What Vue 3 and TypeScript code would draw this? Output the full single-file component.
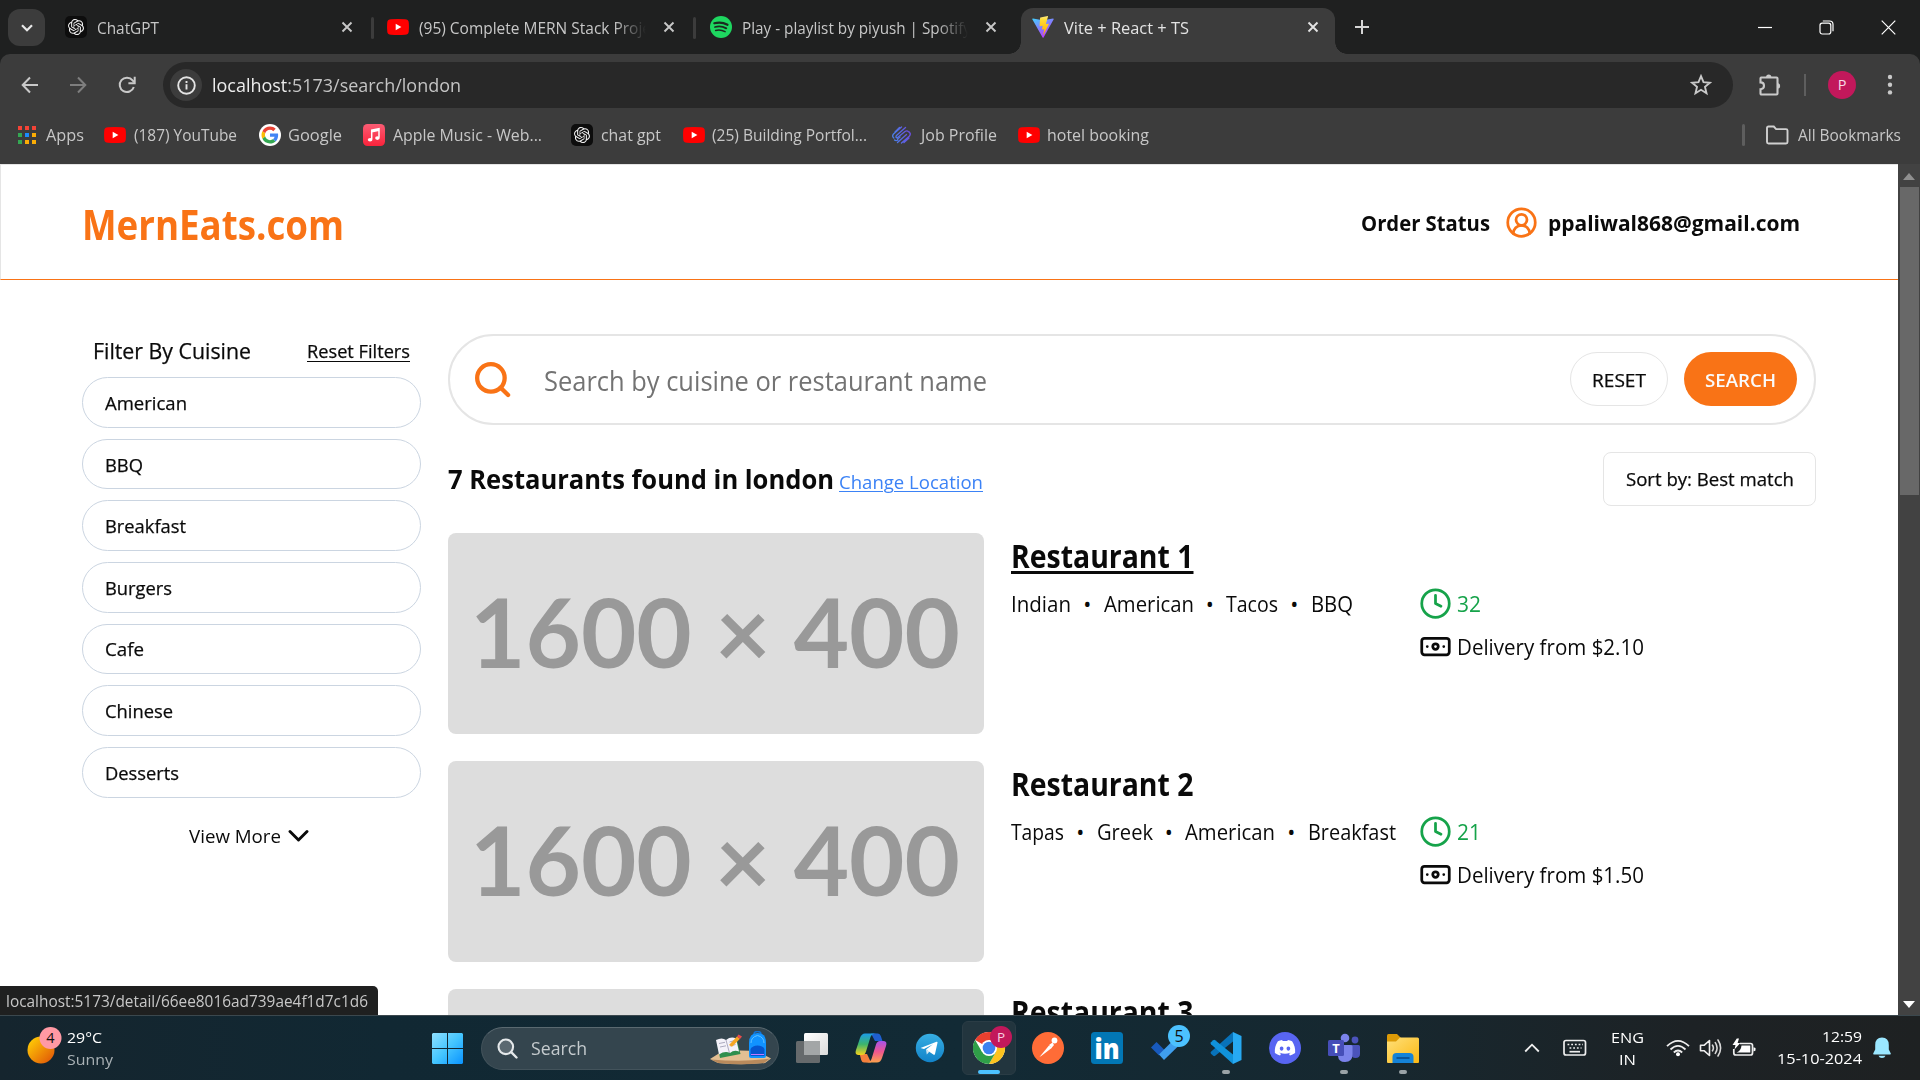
<script setup lang="ts">
import type { Directive } from 'vue'

/** Condenses or widens a label so that it takes an exact width in px. */
const vFit: Directive<HTMLElement, number> = {
  mounted(el, binding) {
    el.style.display = 'inline-block'
    el.style.whiteSpace = 'nowrap'
    el.style.flex = 'none'
    el.style.width = 'max-content'
    const natural = el.getBoundingClientRect().width
    if (natural === 0) return
    el.style.width = `${natural}px`
    el.style.transformOrigin = '0 50%'
    el.style.transform = `scaleX(${binding.value / natural})`
    el.style.marginRight = `${binding.value - natural}px`
  },
}

interface Bookmark { icon: string; label: string; width: number; gap: number; before: number }
const bookmarks: Bookmark[] = [
  { icon: 'youtube', label: '(187) YouTube', width: 103, gap: 8, before: 20 },
  { icon: 'google', label: 'Google', width: 54, gap: 7, before: 22 },
  { icon: 'music', label: 'Apple Music - Web...', width: 149, gap: 8, before: 21 },
  { icon: 'chatgpt', label: 'chat gpt', width: 60, gap: 8, before: 29 },
  { icon: 'youtube', label: '(25) Building Portfol...', width: 155, gap: 7, before: 22 },
  { icon: 'job', label: 'Job Profile', width: 76, gap: 8, before: 24 },
  { icon: 'youtube', label: 'hotel booking', width: 102, gap: 7, before: 21 },
]

const appColors = ['#f44336', '#f44336', '#f44336', '#34a853', '#1a8cff', '#fbad05', '#34a853', '#fbad05', '#fbad05']

interface Cuisine { name: string; width: number }
const filters: Cuisine[] = [
  { name: 'American', width: 82 },
  { name: 'BBQ', width: 38 },
  { name: 'Breakfast', width: 81 },
  { name: 'Burgers', width: 67 },
  { name: 'Cafe', width: 39 },
  { name: 'Chinese', width: 68 },
  { name: 'Desserts', width: 74 },
]

interface Restaurant { name: string; hovered: boolean; cuisines: Cuisine[]; minutes: number; price: string }
const restaurants: Restaurant[] = [
  {
    name: 'Restaurant 1', hovered: true, minutes: 32, price: '2.10',
    cuisines: [{ name: 'Indian', width: 60 }, { name: 'American', width: 90 }, { name: 'Tacos', width: 52 }, { name: 'BBQ', width: 42 }],
  },
  {
    name: 'Restaurant 2', hovered: false, minutes: 21, price: '1.50',
    cuisines: [{ name: 'Tapas', width: 53 }, { name: 'Greek', width: 56 }, { name: 'American', width: 90 }, { name: 'Breakfast', width: 88 }],
  },
  { name: 'Restaurant 3', hovered: false, minutes: 0, price: '', cuisines: [] },
]
</script>

<template>
  <div class="screen">
    <svg class="sprite" width="0" height="0">
      <defs>
        <linearGradient id="gVite" x1="0" y1="0" x2="0.6" y2="1"><stop offset="0" stop-color="#41d1ff" /><stop offset="1" stop-color="#bd34fe" /></linearGradient>
        <linearGradient id="gBolt" x1="0" y1="0" x2="0" y2="1"><stop offset="0" stop-color="#ffea83" /><stop offset="0.2" stop-color="#ffdd35" /><stop offset="1" stop-color="#ffa800" /></linearGradient>
        <linearGradient id="gMusic" x1="0" y1="0" x2="0" y2="1"><stop offset="0" stop-color="#fb5c74" /><stop offset="1" stop-color="#fa233b" /></linearGradient>
        <linearGradient id="gJob" x1="0" y1="0" x2="1" y2="0"><stop offset="0" stop-color="#4a80e8" /><stop offset="1" stop-color="#6a4fe0" /></linearGradient>
      </defs>
      <symbol id="chatgpt" viewBox="0 0 22 22">
        <rect width="22" height="22" rx="5" fill="#0d0d0d" />
        <path transform="translate(3 3) scale(.667)" fill="#f2f2f2" d="M22.2819 9.8211a5.9847 5.9847 0 0 0-.5157-4.9108 6.0462 6.0462 0 0 0-6.5098-2.9A6.0651 6.0651 0 0 0 4.9807 4.1818a5.9847 5.9847 0 0 0-3.9977 2.9 6.0462 6.0462 0 0 0 .7427 7.0966 5.98 5.98 0 0 0 .511 4.9107 6.051 6.051 0 0 0 6.5146 2.9001A5.9847 5.9847 0 0 0 13.2599 24a6.0557 6.0557 0 0 0 5.7718-4.2058 5.9894 5.9894 0 0 0 3.9977-2.9001 6.0557 6.0557 0 0 0-.7475-7.0729zm-9.022 12.6081a4.4755 4.4755 0 0 1-2.8764-1.0408l.1419-.0804 4.7783-2.7582a.7948.7948 0 0 0 .3927-.6813v-6.7369l2.02 1.1686a.071.071 0 0 1 .038.052v5.5826a4.504 4.504 0 0 1-4.4945 4.4944zm-9.6607-4.1254a4.4708 4.4708 0 0 1-.5346-3.0137l.142.0852 4.783 2.7582a.7712.7712 0 0 0 .7806 0l5.8428-3.3685v2.3324a.0804.0804 0 0 1-.0332.0615L9.74 19.9502a4.4992 4.4992 0 0 1-6.1408-1.6464zM2.3408 7.8956a4.485 4.485 0 0 1 2.3655-1.9728V11.6a.7664.7664 0 0 0 .3879.6765l5.8144 3.3543-2.0201 1.1685a.0757.0757 0 0 1-.071 0l-4.8303-2.7865A4.504 4.504 0 0 1 2.3408 7.872zm16.5963 3.8558L13.1038 8.364 15.1192 7.2a.0757.0757 0 0 1 .071 0l4.8303 2.7913a4.4944 4.4944 0 0 1-.6765 8.1042v-5.6772a.79.79 0 0 0-.407-.667zm2.0107-3.0231l-.142-.0852-4.7735-2.7818a.7759.7759 0 0 0-.7854 0L9.409 9.2297V6.8974a.0662.0662 0 0 1 .0284-.0615l4.8303-2.7866a4.4992 4.4992 0 0 1 6.6802 4.66zM8.3065 12.863l-2.02-1.1638a.0804.0804 0 0 1-.038-.0567V6.0742a4.4992 4.4992 0 0 1 7.3757-3.4537l-.142.0805L8.704 5.459a.7948.7948 0 0 0-.3927.6813zm1.0976-2.3654l2.602-1.4998 2.6069 1.4998v2.9994l-2.5974 1.4997-2.6067-1.4997Z" />
      </symbol>
      <symbol id="youtube" viewBox="0 0 22 22">
        <path fill="#f00" d="M4 1.700Q11 1.200 18 1.700Q21.400 2 21.700 5Q22.200 11 21.700 17Q21.400 20 18 20.300Q11 20.800 4 20.300Q.6 20 .3 17Q-.2 11 .3 5Q.6 2 4 1.700Z" transform="translate(0 1.900) scale(1 .83)" />
        <path fill="#fff" d="M8.700 7.800v6.400l5.700-3.200z" />
      </symbol>
      <symbol id="spotify" viewBox="0 0 22 22">
        <circle cx="11" cy="11" r="11" fill="#1ed760" />
        <g fill="none" stroke="#1b2a20" stroke-linecap="round"><path d="M4.300 7.300q7-2 13.200 1.500" stroke-width="2.200" /><path d="M5 11q6-1.700 11.300 1.400" stroke-width="1.800" /><path d="M5.600 14.400q5-1.300 9.500 1.300" stroke-width="1.500" /></g>
      </symbol>
      <symbol id="vite" viewBox="0 0 22 22">
        <path fill="url(#gVite)" d="M21.700 3.300 11.600 21.500q-.5.700-1 0L.3 3.300q-.3-.9.600-.8l10.100 1.800 10.100-1.800q.9 0 .6.800z" />
        <path fill="url(#gBolt)" d="M15.800.1 8.400 1.600q-.3.100-.3.400L7.600 9.800q0 .5.500.4l2.100-.5q.5 0 .4.500l-.6 3q0 .5.500.4l1.300-.4q.5 0 .4.500l-1 4.700q0 .7.500.2l5.200-10.500q.2-.5-.4-.4l-2.100.4q-.5 0-.4-.5L15.900 1q.2-.7-.1-.9z" />
      </symbol>
      <symbol id="google" viewBox="0 0 22 22">
        <circle cx="11" cy="11" r="11" fill="#fff" />
        <g transform="translate(2.500 2.500) scale(.354)">
          <path fill="#EA4335" d="M24 9.500c3.540 0 6.710 1.220 9.210 3.600l6.850-6.850C35.900 2.380 30.470 0 24 0 14.620 0 6.510 5.380 2.560 13.220l7.980 6.190C12.430 13.720 17.740 9.500 24 9.500z" />
          <path fill="#4285F4" d="M46.980 24.550c0-1.570-.15-3.090-.38-4.550H24v9.020h12.940c-.58 2.960-2.260 5.480-4.780 7.180l7.730 6c4.510-4.180 7.090-10.360 7.090-17.650z" />
          <path fill="#FBBC05" d="M10.530 28.590c-.48-1.450-.76-2.990-.76-4.590s.27-3.140.76-4.590l-7.980-6.190C.92 16.460 0 20.120 0 24c0 3.880.92 7.540 2.560 10.780l7.970-6.190z" />
          <path fill="#34A853" d="M24 48c6.480 0 11.930-2.130 15.890-5.810l-7.730-6c-2.150 1.450-4.920 2.300-8.160 2.300-6.260 0-11.570-4.220-13.470-9.910l-7.980 6.190C6.510 42.620 14.620 48 24 48z" />
        </g>
      </symbol>
      <symbol id="music" viewBox="0 0 22 22">
        <rect width="22" height="22" rx="4.500" fill="url(#gMusic)" />
        <path d="M8.700 15.200V6.200l7.300-1.500v8.800M8.700 7.700l7.300-1.500" fill="none" stroke="#fff" stroke-width="1.500" />
        <ellipse cx="7.100" cy="15.800" rx="2.300" ry="1.800" fill="#fff" /><ellipse cx="14.400" cy="14.100" rx="2.300" ry="1.800" fill="#fff" />
      </symbol>
      <symbol id="job" viewBox="0 0 22 22">
        <g fill="none" stroke="url(#gJob)" stroke-width="1.300" stroke-linecap="round" stroke-linejoin="round">
          <path d="M10.500 3 2.500 10q-1.800 2.200.3 4M14.500 3.500 5.500 11.500q-1.300 1.800.5 2.500L14 7.500q2-1.300 3.500.200M4 8 8.500 3.500" />
          <path d="M10.500 19 18.500 12q1.800-2.200-.3-4M6.500 18.500 15.500 10.500M6.500 15 9 13M13 18.500l5-4.500M3.500 16q1.500 1.300 3.500 0" />
        </g>
      </symbol>
      <symbol id="close" viewBox="0 0 12 12"><path d="M1.500 1.500l9 9M10.500 1.500l-9 9" stroke="currentColor" stroke-width="1.900" fill="none" /></symbol>
    </svg>

    <!-- Tab strip -->
    <div class="tabs">
      <div class="tab-search"><svg width="12" height="8" viewBox="0 0 12 8"><path d="M1 1.200l5 5 5-5" fill="none" stroke="#e8e8e8" stroke-width="2.200" /></svg></div>
      <div class="tab t1">
        <svg class="fav"><use href="#chatgpt" /></svg><span class="title"><span v-fit="62">ChatGPT</span></span>
        <svg class="x"><use href="#close" /></svg>
      </div>
      <i class="tab-sep" />
      <div class="tab t2">
        <svg class="fav"><use href="#youtube" /></svg><span class="title fade"><span v-fit="232">(95) Complete MERN Stack Proje</span></span>
        <svg class="x"><use href="#close" /></svg>
      </div>
      <i class="tab-sep" />
      <div class="tab t3">
        <svg class="fav"><use href="#spotify" /></svg><span class="title fade"><span v-fit="229">Play - playlist by piyush | Spotify</span></span>
        <svg class="x"><use href="#close" /></svg>
      </div>
      <div class="tab active">
        <svg class="fav"><use href="#vite" /></svg><span class="title"><span v-fit="125">Vite + React + TS</span></span>
        <svg class="x"><use href="#close" /></svg>
      </div>
      <svg class="plus" width="16" height="16" viewBox="0 0 16 16"><path d="M8 1v14M1 8h14" stroke="#d5d5d5" stroke-width="2" /></svg>
      <div class="win">
        <svg width="14" height="14" viewBox="0 0 14 14"><path d="M0 7.500h14" stroke="#fff" stroke-width="1.200" /></svg>
        <svg width="15" height="15" viewBox="0 0 15 15"><g fill="none" stroke="#fff" stroke-width="1.200"><rect x="1" y="3.200" width="10.800" height="10.800" rx="2.200" /><path d="M3.800 1h6.700q3.500 0 3.500 3.500v6.700" /></g></svg>
        <svg width="15" height="15" viewBox="0 0 15 15"><path d="M.7.700l13.600 13.600M14.300.7L.7 14.300" stroke="#fff" stroke-width="1.200" /></svg>
      </div>
    </div>

    <!-- Toolbar -->
    <div class="toolbar">
      <svg class="nav back" width="18" height="18" viewBox="0 0 18 18"><path d="M17 9H2M9 1.500L1.700 9 9 16.500" fill="none" stroke="#c9c9c9" stroke-width="2" /></svg>
      <svg class="nav fwd" width="18" height="18" viewBox="0 0 18 18"><path d="M1 9h15M9 1.500L16.300 9 9 16.500" fill="none" stroke="#7e7e7e" stroke-width="2" /></svg>
      <svg class="nav" width="18" height="18" viewBox="0 0 18 18"><path d="M15.800 11A7.200 7.200 0 1 1 14.600 4.400L16 6" fill="none" stroke="#c9c9c9" stroke-width="2" /><path d="M16.700.8v6.400h-6.300" fill="none" stroke="#c9c9c9" stroke-width="2" /></svg>
      <div class="omnibox">
        <div class="info"><svg width="19" height="19" viewBox="0 0 19 19"><circle cx="9.500" cy="9.500" r="8.300" fill="none" stroke="#e3e3e3" stroke-width="1.900" /><path d="M9.500 8.300v5.200M9.500 5v2" stroke="#e3e3e3" stroke-width="1.900" /></svg></div>
        <span class="url"><span v-fit="249"><b>localhost</b>:5173/search/london</span></span>
        <svg class="star" width="22" height="22" viewBox="0 0 22 22"><path d="M11 2.200l2.500 6 6.400.5-4.900 4.200 1.500 6.300-5.500-3.400-5.500 3.400L7 12.900 2.100 8.700l6.400-.5z" fill="none" stroke="#c9c9c9" stroke-width="1.900" /></svg>
      </div>
      <svg class="ext" width="24" height="24" viewBox="0 0 24 24"><path d="M3.500 4.500h16q1 0 1 1v15q0 1-1 1h-15q-1 0-1-1v-4.300q3.500 0 3.500-3.400T3.500 9.400V5.500q0-1 1-1z" fill="none" stroke="#c9c9c9" stroke-width="2.100" /><path d="M9 4.500a2.700 2.900 0 0 1 5.400 0zM20.500 10.200a2.700 2.800 0 0 1 0 5.600z" fill="#c9c9c9" /></svg>
      <i class="bar-sep" />
      <div class="avatar">P</div>
      <svg class="dots" width="6" height="24" viewBox="0 0 6 24"><g fill="#c9c9c9"><circle cx="3" cy="4" r="2.200" /><circle cx="3" cy="11.700" r="2.200" /><circle cx="3" cy="19.400" r="2.200" /></g></svg>
    </div>

    <!-- Bookmarks bar -->
    <div class="bookmarks">
      <div class="apps"><i v-for="(c, i) in appColors" :key="i" :style="{ background: c }" /></div>
      <span class="bm-label first" v-fit="38">Apps</span>
      <template v-for="b in bookmarks" :key="b.label">
        <svg class="fav" :style="{ marginLeft: b.before + 'px', marginRight: b.gap + 'px' }"><use :href="'#' + b.icon" /></svg>
        <span class="bm-label" v-fit="b.width">{{ b.label }}</span>
      </template>
      <i class="bm-sep" />
      <svg class="folder" width="24" height="20" viewBox="0 0 24 20"><path d="M2 3q0-1.500 1.500-1.500h5.300l2.300 2.600h9.900q1.500 0 1.500 1.500V17q0 1.500-1.500 1.500H3.500Q2 18.500 2 17z" fill="none" stroke="#d0d0d0" stroke-width="1.900" /></svg>
      <div class="bm-all"><span class="bm-label" v-fit="103">All Bookmarks</span></div>
    </div>

    <!-- Page viewport -->
    <div class="viewport">
      <div class="page">
        <header>
          <div class="logo" v-fit="262">MernEats.com</div>
          <div class="account">
            <span v-fit="129">Order Status</span>
            <svg class="user" width="33" height="33" viewBox="0 0 24 24" fill="none" stroke="#f97316" stroke-width="2" stroke-linecap="round"><path d="M18 20a6 6 0 0 0-12 0" /><circle cx="12" cy="10" r="4" /><circle cx="12" cy="12" r="10" /></svg>
            <span v-fit="252">ppaliwal868@gmail.com</span>
          </div>
        </header>

        <main>
          <aside>
            <div class="filter-head">
              <span class="filter-title medium" v-fit="158">Filter By Cuisine</span>
              <span class="filter-reset medium" v-fit="103">Reset Filters</span>
            </div>
            <div class="pills">
              <div v-for="f in filters" :key="f.name" class="pill medium"><span v-fit="f.width">{{ f.name }}</span></div>
            </div>
            <div class="more">
              <span v-fit="92">View More</span>
              <svg width="21" height="14" viewBox="0 0 21 14"><path d="M2 2.500l8.500 8.500L19 2.500" fill="none" stroke="#0a0a0a" stroke-width="2.900" stroke-linecap="round" stroke-linejoin="round" /></svg>
            </div>
          </aside>

          <section>
            <div class="search">
              <svg class="lens" width="41.250" height="41.250" viewBox="0 0 24 24" fill="none" stroke="#f97316" stroke-width="2.500" stroke-linecap="round"><circle cx="11" cy="11" r="8" /><path d="M21 21l-4.300-4.300" /></svg>
              <span class="ph" v-fit="443">Search by cuisine or restaurant name</span>
              <div class="btn reset medium"><span v-fit="54">RESET</span></div>
              <div class="btn go"><span v-fit="71">SEARCH</span></div>
            </div>
            <div class="found">
              <span class="found-text" v-fit="386">7 Restaurants found in london</span>
              <span class="change" v-fit="144">Change Location</span>
              <div class="sort medium"><span v-fit="168">Sort by: Best match</span></div>
            </div>
            <div class="list">
              <article v-for="r in restaurants" :key="r.name">
                <div class="photo"><span v-if="r.cuisines.length" v-fit="490">1600 × 400</span></div>
                <div class="info-col">
                  <h3 :class="{ hovered: r.hovered }"><span v-fit="182.500">{{ r.name }}</span></h3>
                  <div v-if="r.cuisines.length" class="meta">
                    <div class="cuisines">
                      <template v-for="(c, i) in r.cuisines" :key="c.name">
                        <i v-if="i > 0" class="dot">•</i><span v-fit="c.width">{{ c.name }}</span>
                      </template>
                    </div>
                    <div class="delivery">
                      <div class="line time">
                        <svg width="33" height="33" viewBox="0 0 24 24" fill="none" stroke="currentColor" stroke-width="2" stroke-linecap="round" stroke-linejoin="round"><circle cx="12" cy="12" r="10" /><path d="M12 6v6l4 2" /></svg>
                        <span v-fit="24">{{ r.minutes }}</span>
                      </div>
                      <div class="line">
                        <svg width="33" height="33" viewBox="0 0 24 24" fill="none" stroke="currentColor" stroke-width="2" stroke-linecap="round" stroke-linejoin="round"><rect x="2" y="6" width="20" height="12" rx="2" /><circle cx="12" cy="12" r="2" /><path d="M6 12h.01M18 12h.01" /></svg>
                        <span v-fit="187">Delivery from ${{ r.price }}</span>
                      </div>
                    </div>
                  </div>
                </div>
              </article>
            </div>
          </section>
        </main>
      </div>
      <div class="scrollbar">
        <svg width="12" height="7" viewBox="0 0 12 7"><path d="M6 0l6 7H0z" fill="#8f8f8f" /></svg>
        <div class="thumb" />
        <svg class="down" width="12" height="7" viewBox="0 0 12 7"><path d="M0 0h12L6 7z" fill="#fff" /></svg>
      </div>
      <div class="status"><span v-fit="362">localhost:5173/detail/66ee8016ad739ae4f1d7c1d6</span></div>
    </div>

    <!-- Taskbar -->
    <div class="taskbar">
      <svg class="sun" width="36" height="40" viewBox="0 0 36 40">
        <defs><linearGradient id="gSun" x1="0" y1="0" x2="1" y2="1"><stop offset="0.1" stop-color="#ffcb05" /><stop offset="0.9" stop-color="#e25b07" /></linearGradient></defs>
        <circle cx="14" cy="24" r="13.500" fill="url(#gSun)" /><circle cx="23.500" cy="12" r="11" fill="#ff99a4" />
        <text x="23.500" y="17" text-anchor="middle" font-size="14.500" fill="#111">4</text>
      </svg>
      <div class="weather"><span v-fit="35">29°C</span><span class="dim" v-fit="46">Sunny</span></div>

      <svg class="start" width="31" height="31" viewBox="0 0 31 31">
        <defs><linearGradient id="gWin" x1="0" y1="0" x2="31" y2="31" gradientUnits="userSpaceOnUse"><stop offset="0" stop-color="#8fe0ff" /><stop offset="0.5" stop-color="#45c6ff" /><stop offset="1" stop-color="#0a93ff" /></linearGradient></defs>
        <path fill="url(#gWin)" d="M1 0h14v15H0V1zM16 0h14l1 1v14H16zM0 16h15v15H1l-1-1zM16 16h15v14l-1 1H16z" />
      </svg>

      <div class="tb-search">
        <svg width="21" height="21" viewBox="0 0 21 21"><circle cx="8.800" cy="8.800" r="7.300" fill="#5a6870" stroke="#e4e8ea" stroke-width="2.100" /><path d="M14.200 14.200l5.300 5.300" stroke="#e4e8ea" stroke-width="2.400" stroke-linecap="round" /></svg>
        <span v-fit="56">Search</span>
        <svg class="school" width="61" height="34" viewBox="0 0 61 34">
          <path d="M0 28L12 20.500q18-2 36 0l13 7-6 4.500q-24 2.500-47 0z" fill="#e3bf93" /><path d="M1 28.500l7 3.500q23 2.500 46 0l6-4.500q-25 4-59 1z" fill="#b98a5c" />
          <path d="M7 12l20-3 3.500 14-20.500 4z" fill="#2f8f4e" /><path d="M6 9q6-3 10 0 5-4 10-1.500l3 13q-5-2-9 1.500-5-2.500-11 1.500z" fill="#f4f2fa" /><path d="M16 9l3.500 13M9 12.500l6-1.200M10 16l6-1.200M19.500 11l5-1.500M20.500 15l5-1.500" stroke="#8d8aa5" stroke-width=".7" />
          <path d="M19 14l8-8.500 3 2.300-8 8z" fill="#f6a623" /><path d="M27 5.500l1.500-2 3.500 2-2 2.500z" fill="#e94b4b" />
          <path d="M44 3q0-2.500 3.500-2.500T51 3" fill="none" stroke="#1372d3" stroke-width="1.500" /><path d="M39 12q0-10 8.500-10T56 12v13q0 2-2 2H41q-2 0-2-2z" fill="#1193ff" /><path d="M41 12q0-6 6.500-7.500Q54 6 54 12" fill="none" stroke="#63c4ff" stroke-width="1" />
          <path d="M40.500 18q2-3.500 7-3.500t7 3.500v7h-14z" fill="#0656cf" /><path d="M41 23.500h13" stroke="#c07bff" stroke-width="1" />
        </svg>
      </div>

      <svg class="tb" width="32" height="32" viewBox="0 0 32 32">
        <defs><linearGradient id="gTv" x1="0" y1="0" x2="1" y2="1"><stop offset="0" stop-color="#fff" /><stop offset="1" stop-color="#dcdcdc" /></linearGradient></defs>
        <rect x="0" y="9" width="24" height="22" rx="1.500" fill="#666a6c" /><rect x="8" y="1" width="24" height="22" rx="1.500" fill="url(#gTv)" /><path d="M8 9h16v14H8z" fill="#a3a6a7" />
      </svg>

      <svg class="tb" width="32" height="32" viewBox="0 0 32 32">
        <defs>
          <linearGradient id="cA" x1="0" y1="0" x2="0" y2="1"><stop offset="0" stop-color="#1b9be8" /><stop offset="0.5" stop-color="#3cb56c" /><stop offset="1" stop-color="#f6d31c" /></linearGradient>
          <linearGradient id="cB" x1="0" y1="0" x2="0" y2="1"><stop offset="0" stop-color="#a653ea" /><stop offset="0.5" stop-color="#f0568f" /><stop offset="1" stop-color="#fba24d" /></linearGradient>
        </defs>
        <path d="M16 1.500h7q2 0 2.800 2.600L27.500 9H20z" fill="#1f5fd0" /><path d="M16 30.500H9q-2 0-2.800-2.600L4.700 22H12z" fill="#f5803c" />
        <path d="M22 1.500H10q-3.500 0-5 4.500L1 18q-1.500 5 2.500 5H7q3 0 4-3.500L15.500 5q1-3.500 6.500-3.500z" fill="url(#cA)" />
        <path d="M10 30.500h12q3.500 0 5-4.500l4-12q1.500-5-2.500-5H25q-3 0-4 3.500L16.500 27q-1 3.500-6.500 3.500z" fill="url(#cB)" />
      </svg>

      <svg class="tb" width="32" height="32" viewBox="0 0 32 32">
        <defs><linearGradient id="gTg" x1="0" y1="0" x2="0" y2="1"><stop offset="0" stop-color="#37aee2" /><stop offset="1" stop-color="#1283c9" /></linearGradient></defs>
        <circle cx="16" cy="16" r="14.200" fill="url(#gTg)" /><path d="M6.500 16L22.500 9.700q1.300-.3 1 1L21 22q-.4 1.300-1.700.6L12 17.500l7-5.300-9 4.800z" fill="#fff" /><path d="M12 17.400l.8 5 2.700-2.800z" fill="#d4e6f2" />
      </svg>

      <div class="tile">
        <svg class="tb" width="40" height="40" viewBox="-16 -16 40 40">
          <circle r="16" fill="#fff" />
          <path fill="#e8402f" d="M0 0L-13.860-8A16 16 0 0 1 13.860-8H0z" /><path fill="#fcc31e" d="M13.860-8A16 16 0 0 1 0 16L6.900 4 0-8z" /><path fill="#2f9e48" d="M-13.860-8A16 16 0 0 0 0 16L6.900 4-6.900 4z" />
          <circle r="8" fill="#fff" /><circle r="6.300" fill="#3b82f0" />
        </svg>
        <b class="who">P</b>
        <i class="run" />
      </div>

      <svg class="tb" width="32" height="32" viewBox="0 0 32 32"><circle cx="16" cy="16" r="16" fill="#ff6c37" /><path d="M7.500 25l9.500-11.500 3 2.300L9.500 23.800z" fill="#fff" /><circle cx="22.500" cy="8.500" r="2.900" fill="#fff" /><path d="M17 13l3.500-2.500 1.500 2.500-2.500 3z" fill="#fff" /></svg>

      <svg class="tb" width="32" height="32" viewBox="0 0 32 32"><rect width="32" height="32" rx="3.500" fill="#0277b5" /><text x="16" y="27" text-anchor="middle" font-size="29" font-weight="800" textLength="25" lengthAdjust="spacingAndGlyphs" fill="#fff">in</text></svg>

      <svg class="tb todo" width="42" height="40" viewBox="0 0 42 40">
        <path d="M0 22.500L5.500 17l8 8-5.500 5.500z" fill="#185abd" /><path d="M8 30.500L26 12.500l5.500 5.500-18.500 18z" fill="#3f9fee" transform="translate(0 -1)" />
        <circle cx="28" cy="11" r="11" fill="#4cc2ff" /><text x="28" y="16.500" text-anchor="middle" font-size="16" fill="#111">5</text>
      </svg>

      <div class="app">
        <svg class="tb" width="32" height="32" viewBox="0 0 32 32"><path d="M23 0l8.500 4v24L23 32z" fill="#27a9f2" /><path d="M23 0L1 19.800q-1 1 0 2l2.200 2q1 .8 2 0L23 9.500z" fill="#0872b9" /><path d="M23 32L1 12.200q-1-1 0-2l2.200-2q1-.8 2 0L23 22.500z" fill="#1093db" /></svg>
        <i class="run small" />
      </div>

      <svg class="tb" width="32" height="32" viewBox="0 0 32 32"><circle cx="16" cy="16" r="16" fill="#5865f2" /><path transform="translate(5.800 5.600) scale(.85)" fill="#fff" d="M20.317 4.3698a19.7913 19.7913 0 00-4.8851-1.5152.0741.0741 0 00-.0785.0371c-.211.3753-.4447.8648-.6083 1.2495-1.8447-.2762-3.680-.2762-5.4868 0-.1636-.3933-.4058-.8742-.6177-1.2495a.077.077 0 00-.0785-.037 19.7363 19.7363 0 00-4.8852 1.515.0699.0699 0 00-.0321.0277C.5334 9.0458-.319 13.5799.0992 18.0578a.0824.0824 0 00.0312.0561c2.0528 1.5076 4.0413 2.4228 5.9929 3.0294a.0777.0777 0 00.0842-.0276c.4616-.6304.8731-1.2952 1.226-1.9942a.076.076 0 00-.0416-.1057c-.6528-.2476-1.2743-.5495-1.8722-.8923a.077.077 0 01-.0076-.1277c.1258-.0943.2517-.1923.3718-.2914a.0743.0743 0 01.0776-.0105c3.9278 1.7933 8.180 1.7933 12.0614 0a.0739.0739 0 01.0785.0095c.1202.099.246.1981.3728.2924a.077.077 0 01-.0066.1276 12.2986 12.2986 0 01-1.873.8914.0766.0766 0 00-.0407.1067c.3604.698.7719 1.3628 1.225 1.9932a.076.076 0 00.0842.0286c1.961-.6067 3.9495-1.5219 6.0023-3.0294a.077.077 0 00.0313-.0552c.5004-5.177-.8382-9.6739-3.5485-13.6604a.061.061 0 00-.0312-.0286zM8.020 15.3312c-1.1825 0-2.1569-1.0857-2.1569-2.419 0-1.3332.9555-2.4189 2.157-2.4189 1.2108 0 2.1757 1.0952 2.1568 2.419 0 1.3332-.9555 2.4189-2.1569 2.4189zm7.9748 0c-1.1825 0-2.1569-1.0857-2.1569-2.419 0-1.3332.9554-2.4189 2.1569-2.4189 1.2108 0 2.1757 1.0952 2.1568 2.419 0 1.3332-.946 2.4189-2.1568 2.4189Z" /></svg>

      <div class="app">
        <svg class="tb" width="32" height="32" viewBox="0 0 32 32"><circle cx="27" cy="8" r="3.400" fill="#4b53bc" /><path d="M21 13h9.500q1.500 0 1.500 1.500V22q0 4-4.500 4-4 0-4.500-4z" fill="#4b53bc" /><circle cx="17" cy="6" r="4.300" fill="#7b83eb" /><path d="M10 13h13q1.500 0 1.500 1.500V22q0 8-7.500 8-6.500 0-7-6z" fill="#7b83eb" /><rect y="8" width="16" height="16" rx="1.500" fill="#464eb8" /><text x="8" y="20.500" text-anchor="middle" font-size="13" font-weight="700" fill="#fff">T</text></svg>
        <i class="run small" />
      </div>

      <div class="app">
        <svg class="tb" width="32" height="32" viewBox="0 0 32 32">
          <defs><linearGradient id="gFo" x1="0" y1="0" x2="1" y2="1"><stop offset="0" stop-color="#ffe07a" /><stop offset="1" stop-color="#fbb813" /></linearGradient></defs>
          <path d="M0 3.500Q0 2 1.500 2H10l3.500 3.500V12H0z" fill="#dc9a06" /><path d="M0 9.500h9l4-4h17.500Q32 5.500 32 7v23q0 1-1 1H1q-1 0-1-1z" fill="url(#gFo)" /><path d="M5.500 31v-6q0-4 4-4h13q4 0 4 4v6z" fill="#1583d8" /><path d="M9.500 26h13" stroke="#0b4b8c" stroke-width="1.600" />
        </svg>
        <i class="run small" />
      </div>

      <div class="tray">
        <svg width="16" height="10" viewBox="0 0 16 10"><path d="M1.200 8.500L8 1.700l6.800 6.800" fill="none" stroke="#f0f0f0" stroke-width="1.800" /></svg>
        <svg class="kb" width="24" height="18" viewBox="0 0 24 18"><rect x="1" y="1.500" width="21.500" height="14.500" rx="2" fill="none" stroke="#eee" stroke-width="1.700" /><path d="M4.500 5.500h15.500M6.500 9h12" stroke="#eee" stroke-width="1.700" stroke-dasharray="1.800 1.900" /><path d="M6.500 12.700h10.500" stroke="#eee" stroke-width="1.700" /></svg>
        <div class="lang"><span v-fit="33">ENG</span><span v-fit="17">IN</span></div>
        <svg class="wifi" width="24" height="18" viewBox="0 0 24 18"><g fill="none" stroke="#eee" stroke-width="1.800"><path d="M1 7.200Q12-3.500 23 7.200M4.500 10.500q7.500-7.200 15 0M7.800 13.500q4.200-4 8.400 0" /></g><circle cx="12" cy="15.300" r="2" fill="#fff" /></svg>
        <svg class="vol" width="24" height="20" viewBox="0 0 24 20"><path d="M1.500 7.200h3.800L10.500 2.500v15L5.300 12.800H1.500z" fill="none" stroke="#eee" stroke-width="1.600" stroke-linejoin="round" /><path d="M13.500 7.200q1.800 2.800 0 5.600M16.300 4.600q3.600 5.400 0 10.800M19 2q5.200 8 0 16" fill="none" stroke="#d8d8d8" stroke-width="1.600" stroke-linecap="round" /></svg>
        <svg class="bat" width="24" height="20" viewBox="0 0 24 20"><path d="M8 5.500h10.500q2 0 2 2v7.500q0 2-2 2H3.800q-2 0-2-2V11" fill="none" stroke="#eee" stroke-width="1.700" /><path d="M9.500 7.500h8.800v7H4.500q4.500-1.500 5-7zM21.500 9.200l2 .8v2.600l-2 .8zM4.800.5L.5 7h3L2.500 11.500 8.300 5H5.600L7 .5z" fill="#fff" /></svg>
        <div class="clock"><span v-fit="40">12:59</span><span v-fit="85">15-10-2024</span></div>
        <svg class="bell" width="20" height="22" viewBox="0 0 20 22"><path d="M10 0.500q6.800 0 6.800 7.500v4.500l2 4q.3 1-.8 1H2q-1.100 0-.8-1l2-4V8q0-7.500 6.800-7.500zM6.500 18.700h7q-.8 2.300-3.500 2.300t-3.500-2.300z" fill="#9be7ff" /></svg>
      </div>
    </div>
  </div>
</template>

<style>
body { background: #fff; }
</style>

<style scoped>
* { box-sizing: border-box; }
.screen { width: 1920px; height: 1080px; overflow: hidden; display: flex; flex-direction: column; font-family: "Open Sans", "Noto Sans", sans-serif; color: #0a0a0a; background: #1f2020; }
.sprite { position: absolute; }
svg { flex: none; display: block; }
i { font-style: normal; flex: none; }
.fav { width: 22px; height: 22px; }
.medium { font-weight: 500; -webkit-text-stroke: 0.25px currentColor; }

.tabs { height: 54px; flex: none; display: flex; align-items: flex-end; color: #c7c7c7; font-size: 15.500px; }
.tab-search { width: 37px; height: 37px; margin: 0 0 8px 8px; border-radius: 12px; background: #3c3c3c; display: flex; align-items: center; justify-content: center; }
.tab { height: 46px; display: flex; align-items: center; padding-bottom: 8px; }
.tab .title { margin-left: 10px; line-height: 22px; padding-top: 2px; flex: 1; overflow: hidden; white-space: nowrap; }
.tab .title.fade { -webkit-mask-image: linear-gradient(90deg, #000 86%, transparent 100%); mask-image: linear-gradient(90deg, #000 86%, transparent 100%); }
.tab .x { width: 12px; height: 12px; margin-left: 17px; }
.t1 { width: 288px; margin-left: 20px; }
.t2 { width: 288px; margin-left: 13px; }
.t3 { width: 287px; margin-left: 14px; }
.tab-sep { width: 3px; height: 22px; margin-bottom: 15px; border-radius: 2px; background: #3c3c3c; }
.t1 + .tab-sep { margin-left: 18px; }
.t2 + .tab-sep { margin-left: 18px; }
.active { position: relative; width: 314px; margin-left: 24px; padding: 0 16px 8px 11px; background: #3c3c3c; border-radius: 12px 12px 0 0; color: #e3e3e3; }
.active::before, .active::after { content: ""; position: absolute; bottom: 0; width: 12px; height: 12px; }
.active::before { left: -12px; background: radial-gradient(circle at 0 0, transparent 11.500px, #3c3c3c 12px); }
.active::after { right: -12px; background: radial-gradient(circle at 100% 0, transparent 11.500px, #3c3c3c 12px); }
.plus { margin: 0 0 19px 19px; }
.win { margin-left: auto; display: flex; align-items: center; gap: 47px; padding-right: 24px; height: 54px; }

.toolbar { height: 62px; flex: none; display: flex; align-items: center; background: #3c3c3c; border-radius: 10px 10px 0 0; }
.back { margin-left: 21px; }
.fwd { margin: 0 31px 0 30px; }
.omnibox { width: 1570px; height: 46px; margin-left: 27px; border-radius: 23px; background: #282828; display: flex; align-items: center; }
.info { width: 32px; height: 32px; margin-left: 7px; border-radius: 50%; background: #3c3c3c; display: flex; align-items: center; justify-content: center; }
.url { margin-left: 10px; font-size: 18.500px; line-height: 30px; color: #c4c4c4; padding-bottom: 1px; }
.url b { font-weight: 400; color: #ececec; }
.star { margin-left: auto; margin-right: 21px; }
.ext { margin-left: 24px; }
.bar-sep { width: 2px; height: 22px; margin-left: 23px; background: #5e5e5e; }
.avatar { width: 28px; height: 28px; margin-left: 22px; border-radius: 50%; background: #c2185b; color: #f7dbe6; font-size: 14.500px; line-height: 28px; text-align: center; }
.dots { margin-left: 31px; }

.bookmarks { height: 48px; flex: none; display: flex; align-items: center; padding: 0 0 10px 18px; background: #3c3c3c; color: #c7c7c7; font-size: 15.500px; }
.apps { width: 18px; display: grid; grid-template-columns: repeat(3, 4px); gap: 3px; }
.apps i { height: 4px; }
.bm-label { line-height: 22px; margin-bottom: 1px; }
.bm-label.first { margin-left: 10px; }
.bm-sep { width: 3px; height: 22px; margin-left: auto; border-radius: 2px; background: #5e5e5e; }
.folder { margin: 0 9px 0 20px; }
.bm-all { margin-right: 19px; display: flex; }

.viewport { height: 851px; flex: none; display: flex; position: relative; background: #fff; overflow: hidden; }
.page { width: 1898px; height: 851px; overflow: hidden; }
header { height: 116px; border: 1px solid #e5e5e5; border-right: 0; border-bottom-color: #f97316; display: flex; align-items: center; justify-content: space-between; padding: 0 98px 0 81px; }
.logo { font-size: 40.500px; line-height: 56px; font-weight: 700; color: #f97316; padding-top: 5px; }
.account { display: flex; align-items: center; font-size: 21.500px; line-height: 30px; font-weight: 700; }
.account span { padding-top: 2px; }
.user { margin: 0 10px 0 15px; }

main { display: flex; padding: 54px 82px 0; gap: 27px; }
aside { width: 339px; flex: none; }
.filter-head { height: 33px; display: flex; align-items: center; justify-content: space-between; padding: 0 11px 0 11px; line-height: 30px; }
.filter-title { font-size: 21.500px; }
.filter-reset { font-size: 18.500px; text-decoration: underline; text-underline-offset: 3px; text-decoration-thickness: 1px; }
.pills { display: flex; flex-direction: column; gap: 10.900px; margin-top: 10px; }
.pill { height: 50.750px; border: 1px solid #cbd5e1; border-radius: 26px; padding-left: 22px; display: flex; align-items: center; font-size: 18.500px; line-height: 27px; }
.more { height: 35px; margin-top: 21px; display: flex; align-items: center; justify-content: center; gap: 7px; font-size: 19px; line-height: 30px; padding-right: 5px; }

section { width: 1368px; flex: none; }
.search { height: 91px; border: 2px solid #e5e5e5; border-radius: 46px; display: flex; align-items: center; padding: 0 17px 0 22px; }
.ph { margin-left: 31px; font-size: 26.500px; line-height: 40px; color: #737373; padding-top: 2px; }
.btn { height: 54px; margin-bottom: 2px; padding-top: 1px; border-radius: 27px; display: flex; align-items: center; justify-content: center; font-size: 18.500px; }
.reset { width: 98px; margin-left: auto; border: 1px solid #e5e5e5; }
.go { width: 113px; margin-left: 16px; background: #f97316; color: #fafafa; font-weight: 600; }
.found { display: flex; align-items: baseline; margin-top: 27px; height: 54px; }
.found-text { font-size: 27px; line-height: 54px; font-weight: 700; }
.change { margin-left: 5px; font-size: 18.500px; color: #3b82f6; font-weight: 500; text-decoration: underline; text-underline-offset: 2px; text-decoration-thickness: 1px; }
.sort { align-self: stretch; margin-left: auto; width: 213px; border: 1px solid #e5e5e5; border-radius: 8px; display: flex; align-items: center; justify-content: center; font-size: 18.500px; padding-bottom: 2px; }
.list { display: flex; flex-direction: column; gap: 27px; margin-top: 27px; }
article { display: flex; height: 201.100px; }
.photo { width: 536px; border-radius: 8px; background: #ddd; color: #999; font: 700 96px "Lato", sans-serif; display: flex; align-items: center; justify-content: center; padding: 0 3px 6px 0; }
.info-col { margin-left: 27px; flex: 1; }
h3 { margin: 0; height: 44px; line-height: 46px; font-size: 32.500px; font-weight: 700; }
.hovered span { text-decoration: underline; text-decoration-thickness: 3px; text-underline-offset: 3px; }
.meta { display: flex; margin-top: 9.500px; font-size: 21.500px; line-height: 33px; }
.cuisines { width: 407.500px; display: flex; height: 33px; }
.dot { width: 32.500px; text-align: center; }
.delivery { display: flex; flex-direction: column; gap: 10.500px; }
.line { display: flex; height: 33px; gap: 5.500px; }
.time { color: #16a34a; }

.scrollbar { width: 22px; background: #424242; display: flex; flex-direction: column; align-items: center; padding: 9px 1px 7px 1px; }
.thumb { width: 19px; height: 308px; margin-top: 7px; background: #686868; }
.down { margin-top: auto; }
.status { position: absolute; left: 0; bottom: 0; width: 378px; height: 29px; padding-left: 6px; border-top-right-radius: 5px; background: #1f2020; color: #c7c7c7; font-size: 15.500px; line-height: 31px; }

.taskbar { height: 65px; flex: none; border-top: 1px solid #3b484e; background: linear-gradient(90deg, #15252e 0%, #112833 20%, #122a35 50%, #162830 70%, #1d2225 88%, #1e2122 100%); display: flex; align-items: center; color: #fff; font-size: 15px; }
.sun { margin: -4px 0 0 27px; }
.weather { width: 50px; margin-left: 4px; margin-top: -1px; display: flex; flex-direction: column; align-items: flex-start; line-height: 22px; }
.dim { color: #a9b1b5; }
.start { margin-left: 315px; }
.tb-search { width: 298px; height: 43px; margin-left: 18px; border-radius: 22px; background: #34454e; border: 1px solid #43535b; border-top-color: #5a6970; display: flex; align-items: center; padding-left: 15px; font-size: 17.500px; color: #c5cbce; }
.tb-search span { margin-left: 13px; line-height: 24px; }
.school { margin-left: auto; margin-right: 7px; }
.tb { margin-left: 27px; }
.tb-search + .tb { margin-left: 17px; }
.tile { position: relative; width: 54px; height: 54px; margin: 0 0 0 16px; border-radius: 6px; background: #22353e; border: 1px solid #2a3c45; flex: none; }
.tile .tb { margin: 10px 0 0 10px; }
.tile + .tb { margin-left: 16px; }
.who { position: absolute; left: 27px; top: 4px; width: 22px; height: 22px; border-radius: 50%; background: #c2185b; color: #f6cfe0; font-size: 13.500px; font-weight: 400; line-height: 22px; text-align: center; }
.run { position: absolute; left: 15px; bottom: 0; width: 22px; height: 4px; border-radius: 2px; background: #4cc2ff; }
.run.small { left: 12px; bottom: -10px; width: 8px; background: #9aa3a7; }
.app { position: relative; width: 32px; height: 32px; margin-left: 27px; flex: none; }
.app .tb { margin: 0; }
.tb.todo { margin: -6px 0 0 28px; }
.todo + .app { margin-left: 17px; }
.tray { margin-left: auto; display: flex; align-items: center; padding-right: 28px; }
.kb { margin-left: 23px; }
.lang { width: 34px; margin-left: 23px; display: flex; flex-direction: column; align-items: center; line-height: 22px; }
.wifi { margin-left: 22px; }
.vol { margin-left: 9px; }
.bat { margin-left: 9px; }
.clock { margin: -2px 0 0 19px; width: 87px; display: flex; flex-direction: column; align-items: flex-end; line-height: 22px; }
.bell { margin-left: 10px; }
</style>
